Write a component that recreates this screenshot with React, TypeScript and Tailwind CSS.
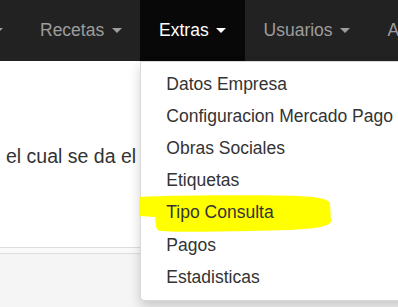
import React from "react";

function Caret({ white }: { white?: boolean }) {
  return (
    <span
      className={`ml-[2.5px] inline-block h-0 w-0 border-x-[5px] border-t-[5px] border-x-transparent align-middle ${
        white ? "border-t-white" : "border-t-[#9d9d9d]"
      }`}
    />
  );
}

function NavItem({ label, active }: { label: string; active?: boolean }) {
  return (
    <li
      className={`flex h-full items-center px-[18.75px] whitespace-nowrap ${
        active ? "bg-[#080808] text-white" : "text-[#9d9d9d]"
      }`}
    >
      <span>{label}</span>
      <span className="w-[4.86px]" />
      <Caret white={active} />
    </li>
  );
}

const extras = [
  "Datos Empresa",
  "Configuracion Mercado Pago",
  "Obras Sociales",
  "Etiquetas",
  "Tipo Consulta",
  "Pagos",
  "Estadisticas",
];

export default function App() {
  return (
    <div
      className="relative h-[307px] w-[398px] overflow-hidden bg-[#f5f5f5] text-[17.5px] text-[#333]"
      style={{ fontFamily: '"Liberation Sans", Arial, sans-serif' }}
    >
      {/* Navbar */}
      <nav className="h-[61px] bg-[#222]">
        <ul className="flex h-full">
          <li className="-ml-[10px] flex h-full items-center pr-[18.75px]">
            <Caret />
          </li>
          <NavItem label="Recetas" />
          <li className="relative h-full">
            <ul className="flex h-full">
              <NavItem label="Extras" active />
            </ul>
            {/* Dropdown */}
            <div className="absolute top-[61px] left-0 z-10 w-[290px] rounded-b-[5px] border border-[rgba(0,0,0,0.15)] bg-white pt-[6px] pb-[7px] shadow-[0_6px_12px_rgba(0,0,0,0.175)]">
              {extras.map((item) => (
                <div
                  key={item}
                  className="relative px-[25px] py-[3.6px] leading-[25px] whitespace-nowrap text-[#333]"
                >
                  {item === "Tipo Consulta" && (
                    <svg
                      className="absolute top-[-2px] left-[-2px]"
                      width="200"
                      height="40"
                      viewBox="0 0 200 40"
                    >
                      <path
                        d="M0 2 C40 0 120 0 160 1 C175 2 188 3 191 8 L192 27 C188 33 170 35 110 36 C60 37 30 37 21 36 C16 35 17 29 16 22 L0 21 Z"
                        fill="#ffff00"
                      />
                    </svg>
                  )}
                  <span className="relative">{item}</span>
                </div>
              ))}
            </div>
          </li>
          <NavItem label="Usuarios" />
          <li className="flex h-full items-center px-[18.75px] text-[#9d9d9d]">A</li>
        </ul>
      </nav>

      {/* Content */}
      <div className="h-[187px] border-b border-[#ddd] bg-white px-[6px] pt-[83px]">
        <p className="text-[19.5px] leading-[25px] whitespace-nowrap">el cual se da el</p>
      </div>
      <div className="h-[6px] border-b border-[#ddd] bg-[#fafafa]" />
    </div>
  );
}
